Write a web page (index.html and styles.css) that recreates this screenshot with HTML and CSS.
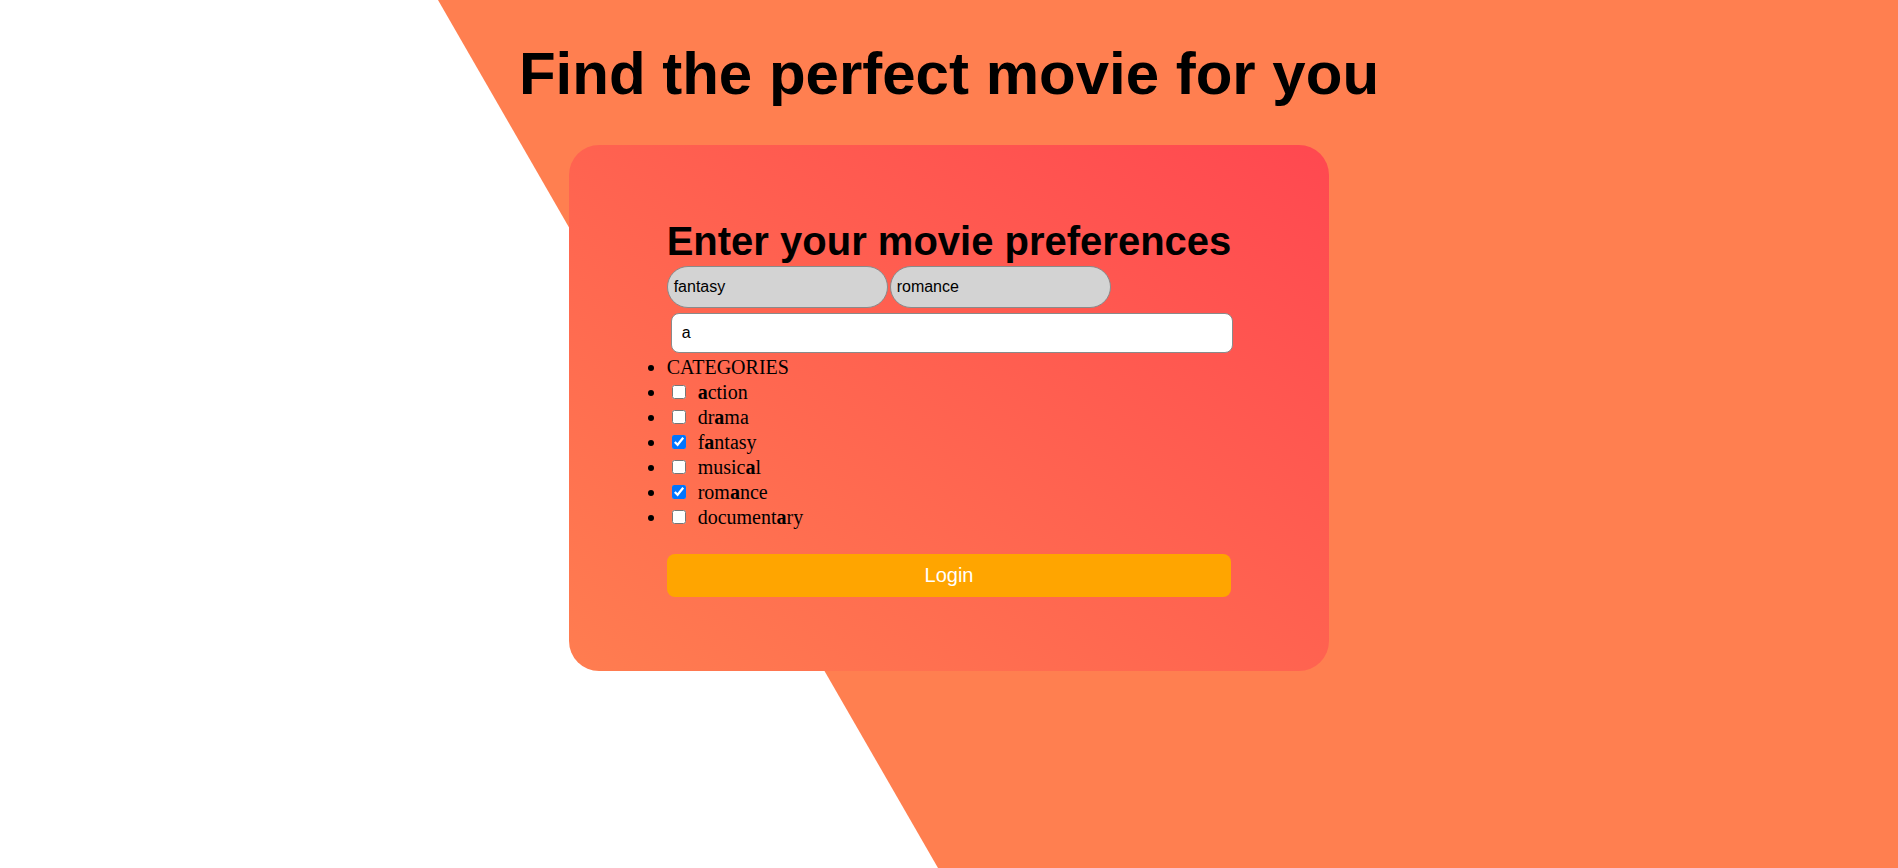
FILE: index.html
```html
<!DOCTYPE html>
<html lang="en">
<head>
<meta charset="utf-8">
<title>Find the perfect movie for you</title>
<link rel="stylesheet" href="styles.css">
</head>
<body>
<div class="page">
  <h1 class="title">Find the perfect movie for you</h1>
  <div class="card">
    <form class="prefs" onsubmit="return false">
      <h2 class="prefs-title">Enter your movie preferences</h2>
      <div class="tags">
        <button type="button" class="tag">fantasy</button>
        <button type="button" class="tag">romance</button>
      </div>
      <input class="search" type="text" value="a">
      <ul class="cats">
        <li class="cat-head">CATEGORIES</li>
        <li><input type="checkbox" class="check"><span><b>a</b>ction</span></li>
        <li><input type="checkbox" class="check"><span>dr<b>a</b>ma</span></li>
        <li><input type="checkbox" class="check" checked><span>f<b>a</b>ntasy</span></li>
        <li><input type="checkbox" class="check"><span>music<b>a</b>l</span></li>
        <li><input type="checkbox" class="check" checked><span>rom<b>a</b>nce</span></li>
        <li><input type="checkbox" class="check"><span>document<b>a</b>ry</span></li>
      </ul>
      <button type="submit" class="login">Login</button>
    </form>
  </div>
</div>
</body>
</html>
```

FILE: styles.css
```css
html, body {
  margin: 0;
  padding: 0;
}

body {
  background: #ffffff;
  font-family: "Liberation Serif", "Times New Roman", serif;
  color: #000;
}

.page {
  position: relative;
  min-height: 100vh;
  overflow: hidden;
  z-index: 0;
}

.page::before {
  content: "";
  position: absolute;
  inset: 0;
  background: #ff7f50;
  clip-path: polygon(438px 0, 100% 0, 100% 100%, 938px 100%);
  z-index: -1;
}

.title {
  margin: 39px 0 37px;
  font-family: "Liberation Sans", Arial, sans-serif;
  font-size: 60px;
  line-height: 69px;
  font-weight: bold;
  text-align: center;
}

.card {
  width: 40%;
  margin: 0 auto;
  box-sizing: border-box;
  padding: 73px 0 74px;
  border-radius: 30px;
  background: linear-gradient(to top right, #ff7d50, #ff4850);
}

.prefs {
  width: fit-content;
  margin: 0 auto;
  display: flex;
  flex-direction: column;
}

.prefs-title {
  margin: 0;
  font-family: "Liberation Sans", Arial, sans-serif;
  font-size: 40px;
  line-height: 46px;
  font-weight: bold;
}

.tags {
  display: flex;
  gap: 2px;
  margin-top: 2px;
}

.tag {
  width: 221px;
  height: 42px;
  box-sizing: border-box;
  padding: 0 6px;
  border: 1px solid #8a8a8a;
  border-radius: 21px;
  background: #d3d3d3;
  font-family: "Liberation Sans", Arial, sans-serif;
  font-size: 16px;
  color: #000;
  text-align: left;
}

.search {
  margin: 5px 0 0 4px;
  width: calc(100% - 2px);
  height: 40px;
  box-sizing: border-box;
  padding: 0 10px;
  border: 1px solid #8a8a8a;
  border-radius: 8px;
  background: #fff;
  font-family: "Liberation Sans", Arial, sans-serif;
  font-size: 16px;
  color: #000;
  outline: none;
}

.cats {
  margin: 2px 0 0;
  padding: 0;
  list-style: disc;
  font-size: 20px;
  line-height: 25px;
}

.check {
  width: 14px;
  height: 14px;
  margin: 3px 12px 3px 5px;
}

.login {
  margin-top: 24px;
  height: 43px;
  border: none;
  border-radius: 8px;
  background: #ffa500;
  color: #fff;
  font-family: "Liberation Sans", Arial, sans-serif;
  font-size: 20px;
}
```
